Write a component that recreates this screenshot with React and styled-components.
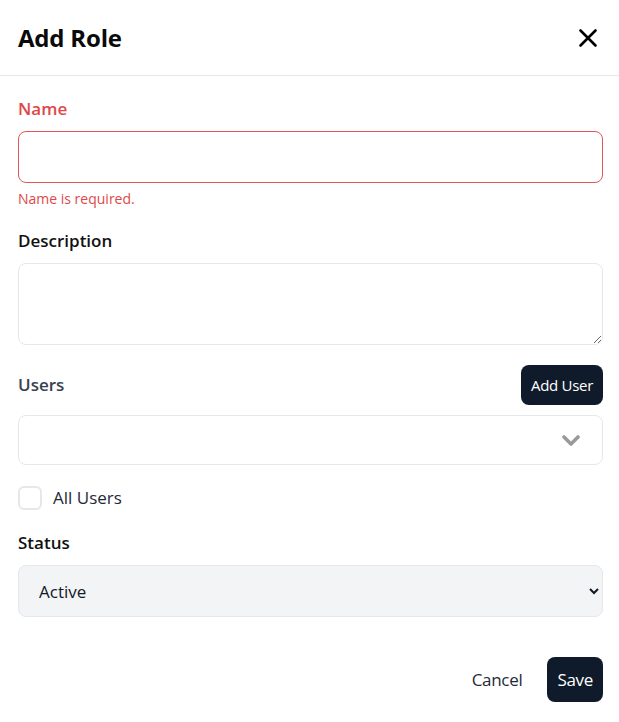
import React from "react";
import styled, { createGlobalStyle } from "styled-components";

const Global = createGlobalStyle`
  html, body { margin: 0; padding: 0; background: #ffffff; }
  body { font-family: "Open Sans", "Noto Sans", sans-serif; color: #111827; }
  * { box-sizing: border-box; }
`;

const Modal = styled.div`
  width: 619px;
  height: 722px;
  background: #fff;
  border-radius: 8px;
  display: flex;
  flex-direction: column;
`;

const Header = styled.header`
  height: 76px;
  flex: none;
  display: flex;
  align-items: center;
  justify-content: space-between;
  padding: 0 20px 0 18px;
  border-bottom: 1px solid #e5e7eb;
`;

const Title = styled.h2`
  margin: 0;
  font-size: 24px;
  font-weight: 700;
  color: #0a0a0a;
  letter-spacing: -0.2px;
`;

const CloseButton = styled.button`
  background: none;
  border: none;
  padding: 0;
  width: 22px;
  height: 22px;
  display: flex;
  align-items: center;
  justify-content: center;
  color: #000;
  cursor: pointer;
`;

const Body = styled.div`
  display: flex;
  flex-direction: column;
  gap: 20px;
  padding: 21px 16px 0 18px;
`;

const Field = styled.div`
  display: flex;
  flex-direction: column;
`;

const Label = styled.label`
  font-size: 17px;
  line-height: 24px;
  font-weight: 600;
  margin-bottom: 10px;
  color: ${(p) => (p.$error ? "#e04848" : p.$muted ? "#374151" : "#111111")};
`;

const TextInput = styled.input`
  height: 52px;
  width: 100%;
  border: 1px solid ${(p) => (p.$error ? "#e05757" : "#e5e7eb")};
  border-radius: 8px;
  padding: 0 14px;
  font: inherit;
  font-size: 16px;
  outline: none;
`;

const ErrorText = styled.div`
  margin-top: 6px;
  font-size: 14px;
  line-height: 20px;
  color: #e04848;
`;

const TextArea = styled.textarea`
  height: 82px;
  width: 100%;
  border: 1px solid #e5e7eb;
  border-radius: 8px;
  padding: 10px 14px;
  font: inherit;
  font-size: 16px;
  outline: none;
  display: block;
`;

const LabelRow = styled.div`
  display: flex;
  align-items: center;
  justify-content: space-between;
  margin-bottom: 10px;
  & > label { margin-bottom: 0; }
`;

const DarkButton = styled.button`
  background: #0f1b2b;
  color: #fff;
  border: none;
  border-radius: 8px;
  font-family: inherit;
  font-size: ${(p) => (p.$small ? "15px" : "17px")};
  height: ${(p) => (p.$small ? "40px" : "45px")};
  padding: 0 10px;
  cursor: pointer;
  letter-spacing: -0.3px;
`;

const MultiSelect = styled.div`
  height: 50px;
  border: 1px solid #e5e7eb;
  border-radius: 8px;
  display: flex;
  align-items: center;
  justify-content: flex-end;
  padding-right: 22px;
  color: #9a9a9a;
`;

const CheckRow = styled.label`
  display: flex;
  align-items: center;
  gap: 11px;
  font-size: 17px;
  line-height: 24px;
  color: #1f2937;
  height: 26px;
`;

const Checkbox = styled.input`
  appearance: none;
  margin: 0;
  width: 24px;
  height: 24px;
  border: 2px solid #e5e7eb;
  border-radius: 6px;
  background: #fff;
`;

const Select = styled.select`
  height: 52px;
  width: 100%;
  background: #f3f4f6;
  border: 1px solid #e5e7eb;
  border-radius: 8px;
  padding: 0 10px 0 16px;
  font-family: inherit;
  font-size: 17px;
  color: #111827;
  outline: none;
`;

const Footer = styled.footer`
  margin-top: auto;
  display: flex;
  align-items: center;
  justify-content: flex-end;
  gap: 25px;
  padding: 0 16px 20px 18px;
`;

const TextButton = styled.button`
  background: none;
  border: none;
  padding: 0;
  font-family: inherit;
  font-size: 17px;
  color: #1f2937;
  cursor: pointer;
  letter-spacing: -0.3px;
`;

export default function App() {
  return (
    <>
      <Global />
      <Modal>
        <Header>
          <Title>Add Role</Title>
          <CloseButton aria-label="Close">
            <svg width="20" height="20" viewBox="0 0 20 20" fill="none" stroke="currentColor" strokeWidth="2.6" strokeLinecap="round">
              <path d="M2.5 2.5 L17.5 17.5 M17.5 2.5 L2.5 17.5" />
            </svg>
          </CloseButton>
        </Header>
        <Body>
          <Field>
            <Label $error>Name</Label>
            <TextInput $error />
            <ErrorText>Name is required.</ErrorText>
          </Field>
          <Field>
            <Label>Description</Label>
            <TextArea />
          </Field>
          <Field>
            <LabelRow>
              <Label $muted>Users</Label>
              <DarkButton $small>Add User</DarkButton>
            </LabelRow>
            <MultiSelect>
              <svg width="18" height="11" viewBox="0 0 18 11" fill="none" stroke="currentColor" strokeWidth="3.6" strokeLinecap="round" strokeLinejoin="round">
                <path d="M2 2 L9 9 L16 2" />
              </svg>
            </MultiSelect>
          </Field>
          <CheckRow>
            <Checkbox type="checkbox" />
            All Users
          </CheckRow>
          <Field>
            <Label>Status</Label>
            <Select defaultValue="active">
              <option value="active">Active</option>
              <option value="inactive">Inactive</option>
            </Select>
          </Field>
        </Body>
        <Footer>
          <TextButton>Cancel</TextButton>
          <DarkButton>Save</DarkButton>
        </Footer>
      </Modal>
    </>
  );
}
